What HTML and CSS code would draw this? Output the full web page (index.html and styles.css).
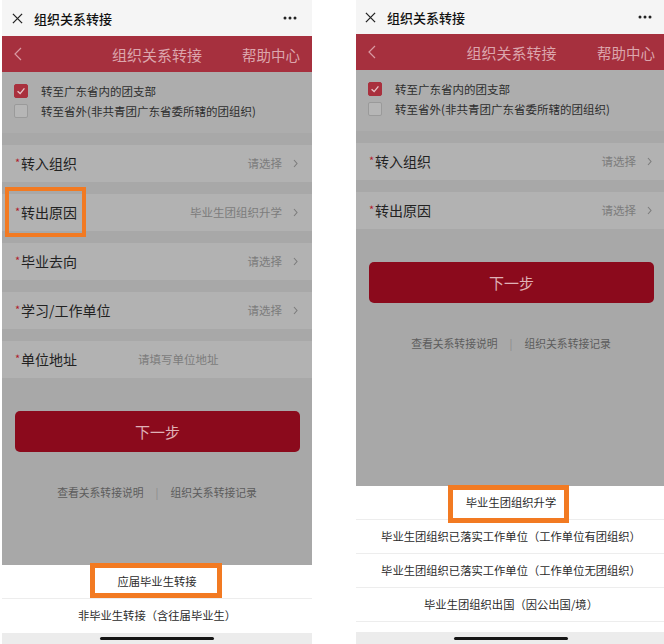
FILE: index.html
```html
<!DOCTYPE html>
<html lang="zh-CN">
<head>
    <meta charset="UTF-8">
    <meta name="viewport" content="width=device-width, initial-scale=1.0">
    <title>组织关系转接</title>
    <link rel="stylesheet" href="styles.css">
</head>

<body>
    <div class="shots">
        <!-- 左：应届毕业生转接 -->
        <div class="phone phone-left">
            <div class="topbar">
                <svg class="close" viewBox="0 0 12 12"><path d="M1 1L11 11M11 1L1 11" /></svg>
                <span class="topbar-title">组织关系转接</span>
                <svg class="more" viewBox="0 0 14 4"><circle cx="2" cy="2" r="1.5" /><circle cx="7" cy="2" r="1.5" /><circle cx="12" cy="2" r="1.5" /></svg>
            </div>
            <div class="navbar">
                <svg class="back" viewBox="0 0 8 14"><path d="M7 1L1 7L7 13" /></svg>
                <span class="nav-title">组织关系转接</span>
                <span class="nav-help">帮助中心</span>
            </div>
            <div class="content">
                <div class="checks">
                    <div class="check-item">
                        <span class="box on"><svg viewBox="0 0 14 14"><path d="M3 7.2L6 10L11 4" /></svg></span>
                        转至广东省内的团支部
                    </div>
                    <div class="check-item">
                        <span class="box"></span>
                        转至省外(非共青团广东省委所辖的团组织)
                    </div>
                </div>
                <div class="rows">
                    <div class="row">
                        <span class="label"><i>*</i>转入组织</span>
                        <span class="value">请选择</span>
                        <svg class="arrow" viewBox="0 0 5 9"><path d="M1 1L4 4.5L1 8" /></svg>
                    </div>
                    <div class="row">
                        <span class="label"><i>*</i>转出原因</span>
                        <span class="value">毕业生团组织升学</span>
                        <svg class="arrow" viewBox="0 0 5 9"><path d="M1 1L4 4.5L1 8" /></svg>
                    </div>
                    <div class="row">
                        <span class="label"><i>*</i>毕业去向</span>
                        <span class="value">请选择</span>
                        <svg class="arrow" viewBox="0 0 5 9"><path d="M1 1L4 4.5L1 8" /></svg>
                    </div>
                    <div class="row">
                        <span class="label"><i>*</i>学习/工作单位</span>
                        <span class="value">请选择</span>
                        <svg class="arrow" viewBox="0 0 5 9"><path d="M1 1L4 4.5L1 8" /></svg>
                    </div>
                    <div class="row row-input">
                        <span class="label"><i>*</i>单位地址</span>
                        <span class="placeholder">请填写单位地址</span>
                    </div>
                </div>
                <div class="btn">下一步</div>
                <div class="links">
                    <span>查看关系转接说明</span>
                    <span class="sep">|</span>
                    <span>组织关系转接记录</span>
                </div>
            </div>
            <div class="sheet">
                <div class="sheet-item">应届毕业生转接</div>
                <div class="sheet-item">非毕业生转接（含往届毕业生）</div>
            </div>
            <div class="home"><span></span></div>

            <div class="mark mark-reason"></div>
            <div class="mark mark-grad"></div>
        </div>

        <!-- 右：转出原因选择 -->
        <div class="phone phone-right">
            <div class="topbar">
                <svg class="close" viewBox="0 0 12 12"><path d="M1 1L11 11M11 1L1 11" /></svg>
                <span class="topbar-title">组织关系转接</span>
                <svg class="more" viewBox="0 0 14 4"><circle cx="2" cy="2" r="1.5" /><circle cx="7" cy="2" r="1.5" /><circle cx="12" cy="2" r="1.5" /></svg>
            </div>
            <div class="navbar">
                <svg class="back" viewBox="0 0 8 14"><path d="M7 1L1 7L7 13" /></svg>
                <span class="nav-title">组织关系转接</span>
                <span class="nav-help">帮助中心</span>
            </div>
            <div class="content">
                <div class="checks">
                    <div class="check-item">
                        <span class="box on"><svg viewBox="0 0 14 14"><path d="M3 7.2L6 10L11 4" /></svg></span>
                        转至广东省内的团支部
                    </div>
                    <div class="check-item">
                        <span class="box"></span>
                        转至省外(非共青团广东省委所辖的团组织)
                    </div>
                </div>
                <div class="rows">
                    <div class="row">
                        <span class="label"><i>*</i>转入组织</span>
                        <span class="value">请选择</span>
                        <svg class="arrow" viewBox="0 0 5 9"><path d="M1 1L4 4.5L1 8" /></svg>
                    </div>
                    <div class="row">
                        <span class="label"><i>*</i>转出原因</span>
                        <span class="value">请选择</span>
                        <svg class="arrow" viewBox="0 0 5 9"><path d="M1 1L4 4.5L1 8" /></svg>
                    </div>
                </div>
                <div class="btn">下一步</div>
                <div class="links">
                    <span>查看关系转接说明</span>
                    <span class="sep">|</span>
                    <span>组织关系转接记录</span>
                </div>
            </div>
            <div class="sheet">
                <div class="sheet-item">毕业生团组织升学</div>
                <div class="sheet-item">毕业生团组织已落实工作单位（工作单位有团组织）</div>
                <div class="sheet-item">毕业生团组织已落实工作单位（工作单位无团组织）</div>
                <div class="sheet-item">毕业生团组织出国（因公出国/境）</div>
                <div class="sheet-space"></div>
            </div>
            <div class="home"><span></span></div>

            <div class="mark mark-upgrade"></div>
        </div>
    </div>
</body>

</html>
```

FILE: styles.css
```css
* {
    box-sizing: border-box;
    margin: 0;
    padding: 0;
}

body {
    width: 664px;
    height: 644px;
    overflow: hidden;
    background: #fff;
    font-family: "Noto Sans CJK SC", "Noto Sans", sans-serif;
}

.shots {
    display: flex;
    gap: 44px;
    height: 644px;
    padding-left: 2px;
}

.phone {
    position: relative;
    flex: none;
    display: flex;
    flex-direction: column;
    width: 310px;
    height: 644px;
}

/* 微信顶栏 */
.topbar {
    display: flex;
    align-items: center;
    height: 36px;
    padding: 0 15px 0 10px;
    background: #f5f5f5;
}

.phone-right .topbar {
    height: 34px;
    padding: 0 14px 0 9px;
}

.close {
    width: 11px;
    height: 11px;
    margin-right: 11px;
    fill: none;
    stroke: #222;
    stroke-width: 1.4;
}

.topbar-title {
    font-size: 13px;
    font-weight: 500;
    color: #111;
}

.more {
    width: 14px;
    height: 4px;
    margin-left: auto;
    fill: #222;
}

/* 红色导航 */
.navbar {
    display: grid;
    grid-template-columns: 1fr auto 1fr;
    align-items: center;
    height: 36px;
    padding: 0 12px;
    background: #a6303e;
    color: #dca6ad;
    font-size: 15px;
}

.phone-right .navbar {
    padding-right: 11px;
}

.back {
    width: 8px;
    height: 14px;
    fill: none;
    stroke: #d99aa3;
    stroke-width: 1.2;
}

.nav-help {
    justify-self: end;
    font-size: 14.5px;
}

/* 灰色遮罩下的内容 */
.content {
    flex: 1;
    background: #a8a8a8;
}

.checks {
    padding: 9px 12px 12px;
    background: #adadad;
    font-size: 11.5px;
    color: #2e2e2e;
}

.check-item {
    display: flex;
    align-items: center;
    height: 20px;
}

.box {
    width: 14px;
    height: 14px;
    margin-right: 13px;
    border: 1px solid #9a9a9a;
    border-radius: 2px;
    background: #b6b6b6;
}

.box.on {
    border-color: #a9303d;
    background: #a9303d;
}

.box svg {
    display: block;
    width: 12px;
    height: 12px;
    fill: none;
    stroke: #e6c4c8;
    stroke-width: 1.6;
}

.rows {
    display: flex;
    flex-direction: column;
    gap: 12px;
    padding-top: 12px;
}

.row {
    display: flex;
    align-items: center;
    height: 37px;
    padding: 0 14px 1px 13px;
    background: #b2b2b2;
}

.label {
    font-size: 14px;
    color: #222;
}

.label i {
    display: inline-block;
    width: 6px;
    font-size: 11px;
    font-style: normal;
    vertical-align: 2px;
    color: #b01c2e;
}

.value {
    margin-left: auto;
    font-size: 11.5px;
    color: #7c7c7c;
}

.arrow {
    width: 5px;
    height: 9px;
    margin-left: 11px;
    fill: none;
    stroke: #7c7c7c;
    stroke-width: 1.1;
}

.row-input .label {
    width: 123px;
}

.placeholder {
    font-size: 11.5px;
    color: #7c7c7c;
}

.btn {
    height: 41px;
    margin: 33px 12px 0 13px;
    border-radius: 5px;
    background: #8b0a1c;
    color: #dfb1b6;
    font-size: 15px;
    line-height: 41px;
    text-align: center;
}

.links {
    display: flex;
    justify-content: center;
    gap: 12px;
    margin-top: 32px;
    font-size: 10.8px;
    line-height: 16px;
    color: #5c5c5c;
}

.links .sep {
    color: #8a8a8a;
}

/* 底部选择面板 */
.sheet {
    background: #fff;
}

.sheet-item {
    height: 34px;
    border-bottom: 1px solid #ededed;
    font-size: 11.3px;
    line-height: 33px;
    color: #2b2b2b;
    text-align: center;
}

.phone-left .sheet-item:last-child {
    border-bottom: none;
}

.sheet-space {
    height: 10px;
}

.home {
    display: flex;
    justify-content: center;
    align-items: center;
    height: 11px;
    background: #ececec;
}

.phone-right .home {
    height: 12px;
}

.home span {
    width: 114px;
    height: 3px;
    border-radius: 2px;
    background: #161616;
}

/* 橙色标注框 */
.mark {
    position: absolute;
    border: 5px solid #f27a22;
}

.mark-reason {
    left: 3px;
    top: 187px;
    width: 81px;
    height: 50px;
    border-width: 4px;
}

.mark-grad {
    left: 88px;
    top: 563px;
    width: 132px;
    height: 35px;
}

.mark-upgrade {
    left: 92px;
    top: 485px;
    width: 121px;
    height: 38px;
}
```
